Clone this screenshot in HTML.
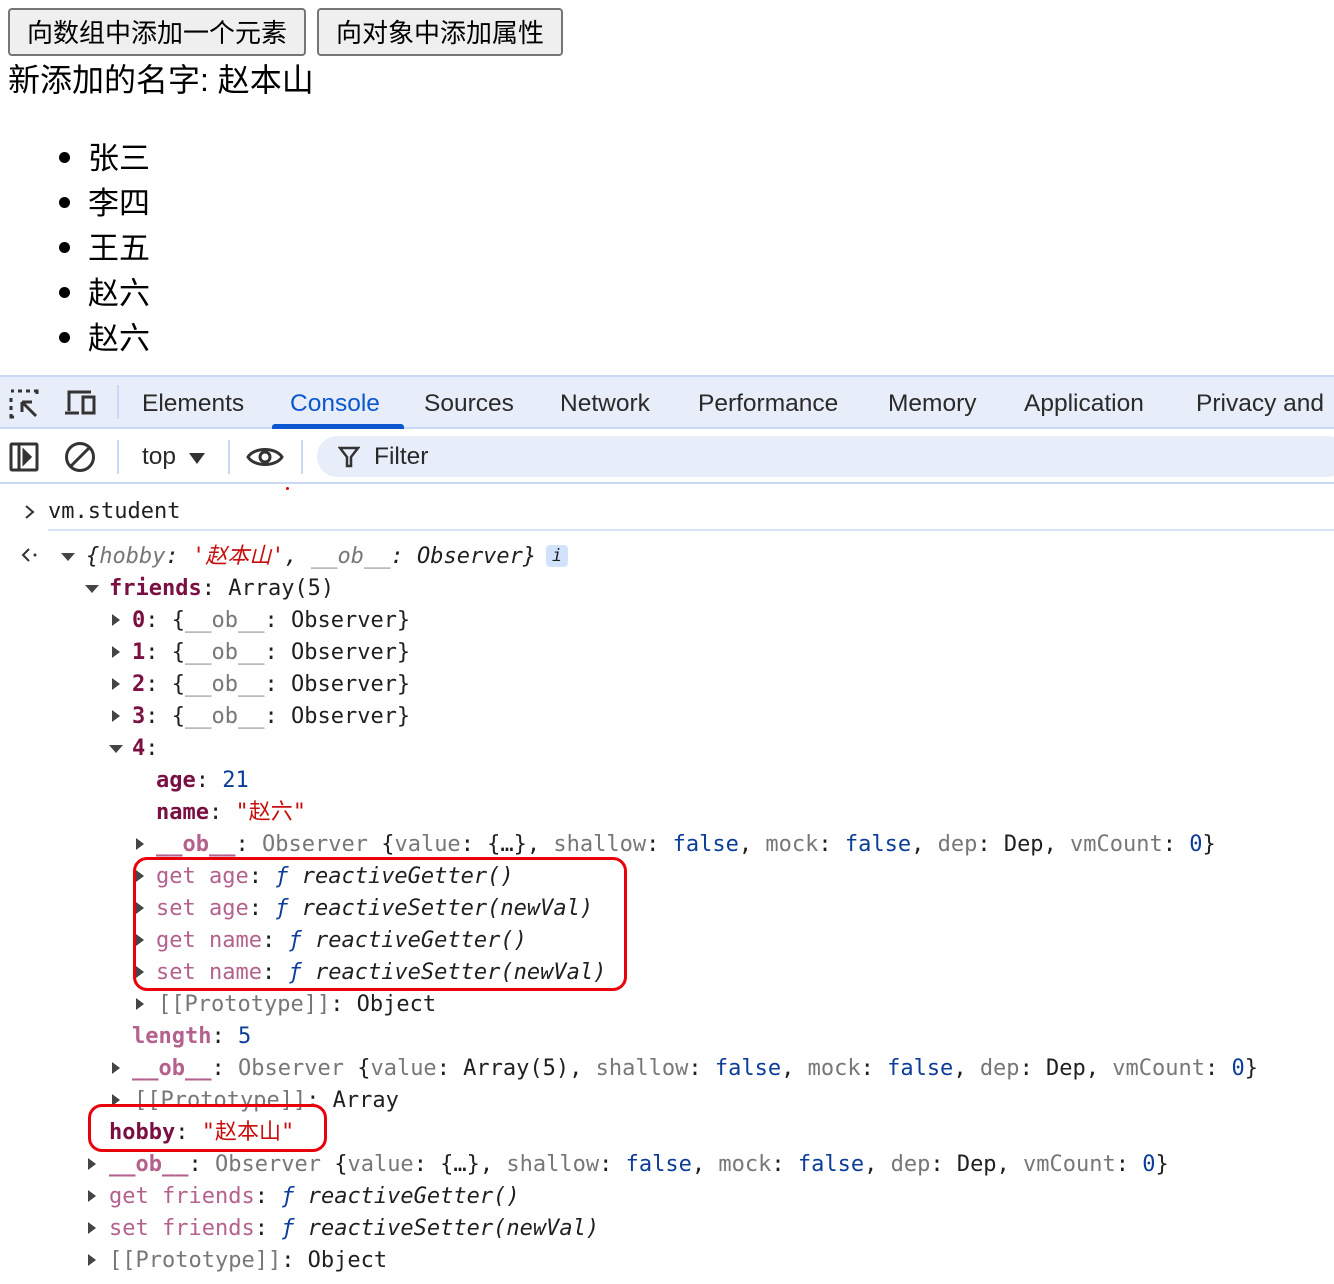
<!DOCTYPE html>
<html><head><meta charset="utf-8">
<style>
*{margin:0;padding:0;box-sizing:border-box}
body{width:1334px;height:1284px;background:#fff;position:relative;overflow:hidden;font-family:"Liberation Sans","Noto Sans CJK SC",sans-serif;color:#000}
.btn{position:absolute;top:8px;height:48px;border:2px solid #767676;border-radius:4px;background:#efefef;font-size:26px;line-height:44px;text-align:center;font-family:"Noto Sans CJK SC",sans-serif;color:#000}
.t{position:absolute;font-size:32px;font-family:"Liberation Sans","Noto Sans CJK SC",sans-serif;white-space:nowrap}
.li{position:absolute;left:88px;font-size:31px;font-family:"Noto Sans CJK SC",sans-serif;line-height:40px}
.dot{position:absolute;left:59px;width:11px;height:11px;border-radius:50%;background:#000}
.bar1{position:absolute;left:0;top:375px;width:1334px;height:54px;background:#e8eef9;border-top:2px solid #c9d9f5;border-bottom:2px solid #c9d9f5}
.tab{position:absolute;top:390px;font-size:24.5px;color:#2a2a2a;font-family:"Liberation Sans",sans-serif}
.line{position:absolute;height:32px;line-height:32px;font-family:"DejaVu Sans Mono","Liberation Mono","Noto Sans CJK SC",monospace;font-size:22px;white-space:pre;color:#1f1f1f}
.k{color:#7a0f42;font-weight:bold}
.d{color:#b4628d}
.dk{color:#b4628d;font-weight:bold}
.g{color:#777}
.s{color:#c80e0e}
.n{color:#0b3d99}
.i{font-style:italic}
.tr{position:absolute;width:0;height:0}
.tr.r{border-top:6px solid transparent;border-bottom:6px solid transparent;border-left:8px solid #444}
.tr.dn{border-left:7px solid transparent;border-right:7px solid transparent;border-top:8px solid #444}
.box{position:absolute;border:3px solid #e8000b;border-radius:14px}
</style></head><body>
<div class="btn" style="left:8px;width:298px">向数组中添加一个元素</div>
<div class="btn" style="left:317px;width:246px">向对象中添加属性</div>
<div class="t" style="left:8px;top:60px;line-height:40px">新添加的名字: 赵本山</div>
<div class="dot" style="top:152px"></div><div class="li" style="top:136px">张三</div>
<div class="dot" style="top:197px"></div><div class="li" style="top:181px">李四</div>
<div class="dot" style="top:242px"></div><div class="li" style="top:226px">王五</div>
<div class="dot" style="top:287px"></div><div class="li" style="top:271px">赵六</div>
<div class="dot" style="top:332px"></div><div class="li" style="top:316px">赵六</div>

<div class="bar1"></div>
<svg style="position:absolute;left:8px;top:388px" width="34" height="32" viewBox="0 0 34 32" fill="none" stroke="#333" stroke-width="3"><path d="M3 3h3M10 3h4M18 3h4M26 3h3v3M3 10v4M3 18v4M3 26v3h3"/><path d="M14 14l14 14M14 14h10M14 14v10"/></svg>
<svg style="position:absolute;left:64px;top:389px" width="34" height="30" viewBox="0 0 34 30" fill="none" stroke="#333" stroke-width="3"><path d="M5 22V3h22"/><path d="M1 24h14"/><rect x="19" y="8" width="11" height="16"/></svg>
<div style="position:absolute;left:117px;top:385px;width:2px;height:34px;background:#c9d9f5"></div>
<div class="tab" style="left:142px">Elements</div>
<div class="tab" style="left:290px;color:#0b57d0">Console</div>
<div style="position:absolute;left:272px;top:424px;width:132px;height:5px;background:#0b57d0;border-radius:3px 3px 0 0"></div>
<div class="tab" style="left:424px">Sources</div>
<div class="tab" style="left:560px">Network</div>
<div class="tab" style="left:698px">Performance</div>
<div class="tab" style="left:888px">Memory</div>
<div class="tab" style="left:1024px">Application</div>
<div class="tab" style="left:1196px">Privacy and</div>

<div style="position:absolute;left:0;top:482px;width:1334px;height:2px;background:#c9d9f5"></div>
<svg style="position:absolute;left:8px;top:441px" width="32" height="32" viewBox="0 0 32 32" fill="none" stroke="#333" stroke-width="3"><rect x="3" y="3" width="26" height="26" rx="1"/><path d="M11 3v26"/><path d="M16 10l6 6-6 6z" fill="#333"/></svg>
<svg style="position:absolute;left:63px;top:440px" width="34" height="34" viewBox="0 0 34 34" fill="none" stroke="#333" stroke-width="3"><circle cx="17" cy="17" r="13.5"/><path d="M8 26L26 8"/></svg>
<div style="position:absolute;left:117px;top:440px;width:2px;height:34px;background:#c9d9f5"></div>
<div class="tab" style="left:142px;top:443px">top</div>
<div style="position:absolute;left:189px;top:453px;border-left:8px solid transparent;border-right:8px solid transparent;border-top:11px solid #333"></div>
<div style="position:absolute;left:228px;top:440px;width:2px;height:34px;background:#c9d9f5"></div>
<svg style="position:absolute;left:246px;top:442px" width="38" height="30" viewBox="0 0 38 30" fill="none" stroke="#333" stroke-width="3"><path d="M2 15C8 5 30 5 36 15C30 25 8 25 2 15z"/><circle cx="19" cy="15" r="5"/></svg>
<div style="position:absolute;left:301px;top:440px;width:2px;height:34px;background:#c9d9f5"></div>
<div style="position:absolute;left:317px;top:436px;width:1030px;height:41px;background:#e8eef9;border-radius:20px"></div>
<svg style="position:absolute;left:338px;top:446px" width="22" height="22" viewBox="0 0 22 22" fill="none" stroke="#333" stroke-width="2.5"><path d="M2 2h18l-7 9v9h-4v-9z"/></svg>
<div class="tab" style="left:374px;top:443px">Filter</div>
<div style="position:absolute;left:286px;top:487px;width:3px;height:3px;background:#e00;border-radius:50%"></div>

<svg style="position:absolute;left:22px;top:503px" width="14" height="18" viewBox="0 0 14 18" fill="none" stroke="#333" stroke-width="2"><path d="M4 3l7 6-7 6"/></svg>
<div class="line" style="left:48px;top:496px">vm.student</div>
<div style="position:absolute;left:48px;top:529px;width:1286px;height:2px;background:#d6e2f7"></div>
<svg style="position:absolute;left:20px;top:546px" width="20" height="18" viewBox="0 0 20 18" fill="none" stroke="#333" stroke-width="2"><path d="M9 3L3 9l6 6"/><circle cx="15" cy="9" r="1.5" fill="#333" stroke="none"/></svg>

<div class="tr dn" style="left:61px;top:553px"></div>
<div class="line i" style="left:86px;top:541px">{<span class="g">hobby</span>: <span class="s">'赵本山'</span>, <span class="g">__ob__</span>: Observer}</div>
<div style="position:absolute;left:546px;top:545px;width:22px;height:22px;background:#d3e2fb;border-radius:4px;font:italic 17px 'DejaVu Sans Mono',monospace;color:#1f1f1f;text-align:center;line-height:22px">i</div>

<div class="tr dn" style="left:85px;top:585px"></div>
<div class="line" style="left:109px;top:573px"><span class="k">friends</span>: Array(5)</div>

<div class="tr r" style="left:112px;top:614px"></div>
<div class="line" style="left:132px;top:605px"><span class="k">0</span>: {<span class="g">__ob__</span>: Observer}</div>
<div class="tr r" style="left:112px;top:646px"></div>
<div class="line" style="left:132px;top:637px"><span class="k">1</span>: {<span class="g">__ob__</span>: Observer}</div>
<div class="tr r" style="left:112px;top:678px"></div>
<div class="line" style="left:132px;top:669px"><span class="k">2</span>: {<span class="g">__ob__</span>: Observer}</div>
<div class="tr r" style="left:112px;top:710px"></div>
<div class="line" style="left:132px;top:701px"><span class="k">3</span>: {<span class="g">__ob__</span>: Observer}</div>
<div class="tr dn" style="left:109px;top:745px"></div>
<div class="line" style="left:132px;top:733px"><span class="k">4</span>:</div>

<div class="line" style="left:156px;top:765px"><span class="k">age</span>: <span class="n">21</span></div>
<div class="line" style="left:156px;top:797px"><span class="k">name</span>: <span class="s">"赵六"</span></div>
<div class="tr r" style="left:136px;top:838px"></div>
<div class="line" style="left:156px;top:829px"><span class="dk">__ob__</span>: <span class="g">Observer</span> {<span class="g">value</span>: {…}, <span class="g">shallow</span>: <span class="n">false</span>, <span class="g">mock</span>: <span class="n">false</span>, <span class="g">dep</span>: Dep, <span class="g">vmCount</span>: <span class="n">0</span>}</div>
<div class="tr r" style="left:136px;top:870px"></div>
<div class="line" style="left:156px;top:861px"><span class="d">get age</span>: <span class="n i">ƒ</span> <span class="i">reactiveGetter()</span></div>
<div class="tr r" style="left:136px;top:902px"></div>
<div class="line" style="left:156px;top:893px"><span class="d">set age</span>: <span class="n i">ƒ</span> <span class="i">reactiveSetter(newVal)</span></div>
<div class="tr r" style="left:136px;top:934px"></div>
<div class="line" style="left:156px;top:925px"><span class="d">get name</span>: <span class="n i">ƒ</span> <span class="i">reactiveGetter()</span></div>
<div class="tr r" style="left:136px;top:966px"></div>
<div class="line" style="left:156px;top:957px"><span class="d">set name</span>: <span class="n i">ƒ</span> <span class="i">reactiveSetter(newVal)</span></div>
<div class="tr r" style="left:136px;top:998px"></div>
<div class="line" style="left:158px;top:989px"><span class="g">[[Prototype]]</span>: Object</div>
<div class="line" style="left:132px;top:1021px"><span class="dk">length</span>: <span class="n">5</span></div>
<div class="tr r" style="left:112px;top:1062px"></div>
<div class="line" style="left:132px;top:1053px"><span class="dk">__ob__</span>: <span class="g">Observer</span> {<span class="g">value</span>: Array(5), <span class="g">shallow</span>: <span class="n">false</span>, <span class="g">mock</span>: <span class="n">false</span>, <span class="g">dep</span>: Dep, <span class="g">vmCount</span>: <span class="n">0</span>}</div>
<div class="tr r" style="left:112px;top:1094px"></div>
<div class="line" style="left:134px;top:1085px"><span class="g">[[Prototype]]</span>: Array</div>
<div class="line" style="left:109px;top:1117px"><span class="k">hobby</span>: <span class="s">"赵本山"</span></div>
<div class="tr r" style="left:88px;top:1158px"></div>
<div class="line" style="left:109px;top:1149px"><span class="dk">__ob__</span>: <span class="g">Observer</span> {<span class="g">value</span>: {…}, <span class="g">shallow</span>: <span class="n">false</span>, <span class="g">mock</span>: <span class="n">false</span>, <span class="g">dep</span>: Dep, <span class="g">vmCount</span>: <span class="n">0</span>}</div>
<div class="tr r" style="left:88px;top:1190px"></div>
<div class="line" style="left:109px;top:1181px"><span class="d">get friends</span>: <span class="n i">ƒ</span> <span class="i">reactiveGetter()</span></div>
<div class="tr r" style="left:88px;top:1222px"></div>
<div class="line" style="left:109px;top:1213px"><span class="d">set friends</span>: <span class="n i">ƒ</span> <span class="i">reactiveSetter(newVal)</span></div>
<div class="tr r" style="left:88px;top:1254px"></div>
<div class="line" style="left:109px;top:1245px"><span class="g">[[Prototype]]</span>: Object</div>

<div class="box" style="left:133px;top:857px;width:494px;height:134px"></div>
<div class="box" style="left:88px;top:1104px;width:239px;height:48px"></div>
</body></html>
